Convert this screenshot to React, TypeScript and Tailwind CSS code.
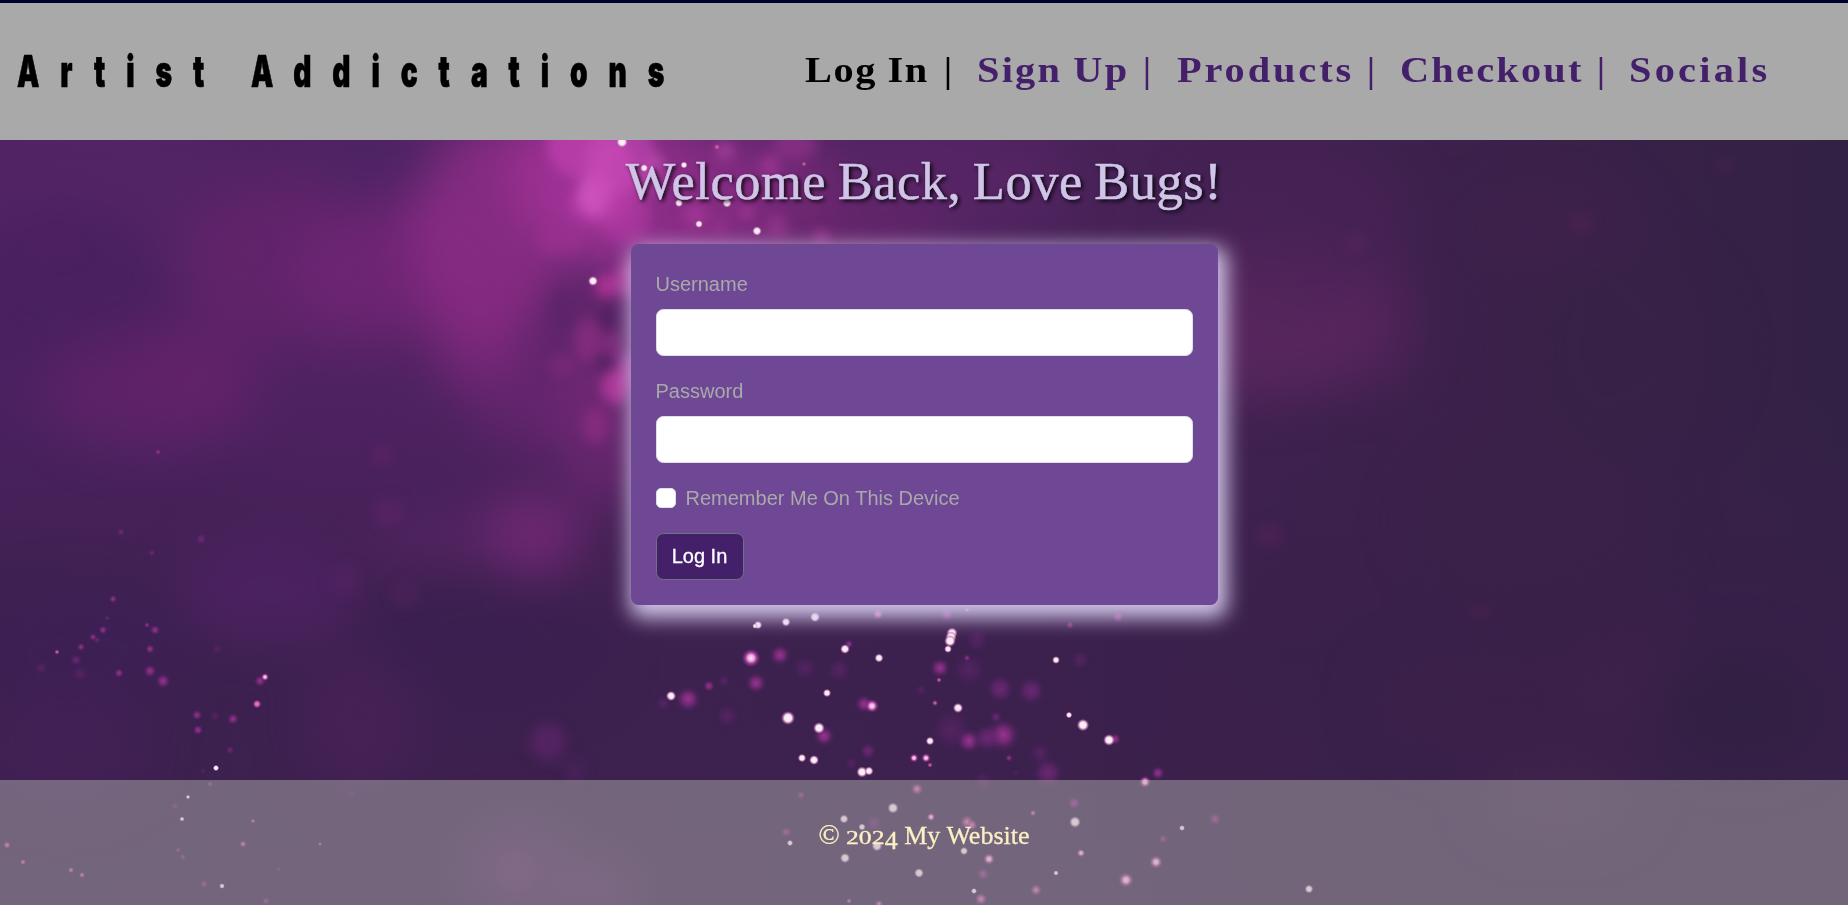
type Glow = [number, number, number, number, string, number];
type Spark = [number, number, number, string];

// x, y, rx, ry, colour, opacity
const haze: Glow[] = [
  [90, 200, 160, 90, "#552468", 0.6],
  [60, 300, 110, 90, "#48205f", 0.8],
  [330, 260, 150, 90, "#6a2470", 0.6],
  [400, 270, 110, 60, "#76277a", 0.6],
  [150, 390, 110, 60, "#68236d", 0.6],
  [200, 360, 60, 60, "#67236c", 0.4],
  [490, 230, 80, 110, "#8c2d86", 0.85],
  [480, 320, 50, 70, "#862a80", 0.7],
  [370, 150, 70, 50, "#4c2464", 0.75],
  [580, 170, 70, 80, "#a03196", 0.9],
  [650, 200, 100, 80, "#a23598", 0.8],
  [740, 200, 110, 70, "#842c82", 0.8],
  [860, 225, 90, 50, "#68266c", 0.8],
  [950, 180, 120, 50, "#5a2567", 0.7],
  [540, 400, 70, 50, "#6e2674", 0.6],
  [600, 400, 40, 110, "#7d2a7c", 0.6],
  [530, 535, 50, 42, "#792978", 0.8],
  [440, 540, 70, 30, "#5e2569", 0.5],
  [340, 430, 90, 50, "#4c215f", 0.6],
  [270, 590, 90, 60, "#4e2264", 0.7],
  [80, 650, 110, 60, "#3f1f57", 0.7],
  [480, 640, 130, 70, "#3b1f50", 0.8],
  [60, 750, 90, 60, "#48205b", 0.5],
  [360, 720, 60, 70, "#4b215b", 0.6],
  [1270, 320, 120, 80, "#5b2760", 0.8],
  [1370, 320, 45, 70, "#56255d", 0.6],
  [1300, 220, 110, 80, "#4a2359", 0.6],
  [1560, 230, 80, 50, "#41224d", 0.5],
  [1620, 350, 100, 100, "#372246", 0.7],
  [1540, 520, 130, 90, "#392148", 0.5],
  [1500, 700, 130, 60, "#3c214a", 0.6],
  [1630, 680, 60, 60, "#40214a", 0.5],
  [1740, 710, 80, 60, "#2f2040", 0.6],
  [520, 870, 60, 50, "#5b2a66", 0.6],
  [600, 890, 40, 30, "#682f6e", 0.5],
  [1560, 800, 80, 40, "#48254f", 0.5],
];

const bokeh: Glow[] = [
  [585, 145, 38, 34, "#bd40ad", 0.75],
  [620, 160, 36, 38, "#c047b2", 0.6],
  [600, 205, 32, 20, "#b83ca8", 0.6],
  [596, 195, 19, 21, "#d45ac4", 0.75],
  [612, 170, 22, 30, "#c84ab6", 0.6],
  [560, 240, 24, 16, "#9d3293", 0.5],
  [625, 215, 25, 28, "#b83ba6", 0.5],
  [606, 286, 10, 12, "#bd349c", 0.8],
  [627, 280, 14, 16, "#b53a9f", 0.7],
  [588, 340, 14, 22, "#8c2d82", 0.7],
  [612, 345, 8, 14, "#95308a", 0.5],
  [615, 387, 14, 17, "#b53a9f", 0.85],
  [627, 370, 8, 18, "#b83fa5", 0.7],
  [596, 425, 13, 18, "#8e2d83", 0.7],
  [562, 366, 14, 12, "#7d2979", 0.6],
  [562, 310, 12, 22, "#5a2369", 0.6],
  [610, 318, 12, 12, "#4d205c", 0.7],
  [603, 362, 8, 9, "#4d205c", 0.7],
  [725, 151, 9, 8, "#c04bad", 0.6],
  [770, 166, 10, 10, "#a8389a", 0.7],
  [695, 215, 12, 12, "#b03d9f", 0.55],
  [747, 213, 6, 6, "#c343a8", 0.6],
  [777, 226, 11, 11, "#a23995", 0.6],
  [720, 226, 7, 7, "#a53997", 0.5],
  [821, 237, 7, 7, "#b03e9e", 0.7],
  [657, 163, 8, 8, "#c758b8", 0.5],
  [650, 180, 13, 13, "#b84aab", 0.5],
  [795, 145, 22, 14, "#96338c", 0.6],
  [382, 455, 11, 10, "#6b246c", 0.4],
  [388, 512, 15, 15, "#62236b", 0.45],
  [55, 250, 30, 15, "#59246a", 0.2],
  [252, 250, 9, 10, "#6a296f", 0.3],
  [345, 580, 16, 16, "#5b2568", 0.35],
  [405, 595, 14, 14, "#572463", 0.35],
  [548, 742, 18, 18, "#5c2569", 0.7],
  [575, 772, 10, 13, "#512360", 0.5],
  [515, 870, 20, 22, "#693069", 0.3],
  [1355, 243, 12, 10, "#5d285f", 0.4],
  [1581, 223, 12, 10, "#52264f", 0.5],
  [1268, 535, 15, 12, "#542359", 0.5],
  [1480, 612, 12, 8, "#4d244e", 0.5],
  [1725, 165, 10, 8, "#48254d", 0.5],
];

// x, y, radius, kind
const sparks: Spark[] = [
  [622, 142, 5, "w"], [644, 168, 3.5, "w"], [684, 165, 3, "w"], [717, 147, 2.5, "p"],
  [679, 203, 3.5, "w"], [727, 203, 4, "w"], [699, 224, 3.3, "w"], [757, 231, 4, "w"],
  [804, 164, 2, "p"], [593, 281, 4.2, "w"], [158, 452, 2.2, "m"],
  [758, 625, 3.5, "w"], [755, 626, 2.2, "w"], [786, 622, 3.7, "w"], [815, 617, 4.2, "w"],
  [878, 614, 4, "p"], [947, 614, 5, "m"], [967, 610, 2, "p"], [1070, 625, 2.8, "m"], [1118, 617, 4, "m"],
  [952, 633, 4.6, "w"], [951, 637, 4.6, "w"], [950, 641, 4.8, "w"], [948, 649, 3.2, "w"],
  [751, 658, 6.2, "h"], [780, 655, 7, "m"], [756, 683, 7, "m"], [849, 644, 3, "m"], [845, 649, 4, "w"],
  [879, 658, 3.7, "w"], [805, 668, 9, "f"], [839, 670, 9, "f"], [709, 686, 4, "m"], [724, 681, 5, "f"],
  [671, 696, 4.2, "w"], [688, 699, 8.5, "m"], [663, 703, 6, "f"], [727, 716, 9, "f"],
  [827, 693, 3.4, "w"], [864, 704, 6, "m"], [872, 706, 4.6, "h"], [788, 718, 5.7, "w"],
  [824, 736, 7, "m"], [819, 728, 4.8, "w"], [940, 668, 6.5, "m"], [969, 670, 12, "f"],
  [977, 640, 9, "f"], [1000, 689, 10, "m2"], [1031, 691, 10, "m2"], [939, 680, 2, "p"],
  [921, 690, 4, "f"], [935, 703, 2.2, "p"], [958, 708, 4.2, "w"], [967, 658, 2.3, "m"],
  [1056, 660, 3.2, "w"], [1080, 660, 7, "f"], [951, 730, 15, "f"], [969, 741, 8, "m"],
  [1003, 735, 11, "m"], [987, 738, 10, "m2"], [996, 717, 4, "m2"], [930, 741, 3.5, "w"],
  [1069, 715, 2.7, "w"], [1083, 725, 5.1, "w"], [1115, 739, 4, "m"], [1109, 740, 4.8, "w"],
  [868, 751, 6, "m2"], [802, 758, 3.5, "w"], [814, 760, 4.1, "w"], [851, 763, 5, "f"],
  [914, 758, 3, "h"], [926, 758, 3.2, "h"], [930, 765, 2, "p"], [862, 772, 4.6, "w"], [869, 771, 3.7, "w"],
  [1009, 758, 2.5, "m"], [1040, 753, 8, "f"], [1048, 773, 11, "m2"], [1016, 773, 2, "f"],
  [983, 782, 8, "f"], [1158, 773, 4.6, "m"], [1145, 782, 4, "h"],
  [801, 795, 3, "m"], [917, 789, 4.6, "p"], [893, 808, 4.6, "w"], [844, 819, 3.7, "w"],
  [874, 823, 6, "m2"], [862, 827, 3, "w"], [931, 817, 2.9, "h"], [967, 822, 5, "p"], [972, 825, 4, "p"],
  [786, 832, 3.8, "m"], [790, 843, 2.6, "w"], [877, 846, 4.4, "w"], [845, 858, 4.2, "w"],
  [964, 851, 3.4, "w"], [989, 859, 4, "h"], [919, 873, 4, "w"], [983, 874, 4.5, "m"],
  [974, 891, 2.5, "w"], [981, 899, 4.5, "p"], [1036, 890, 4.3, "p"], [1056, 873, 2.2, "w"],
  [1074, 803, 4.5, "m"], [1075, 822, 4.8, "w"], [1033, 813, 2.4, "p"], [1081, 853, 2.9, "h"],
  [1126, 880, 5.1, "h"], [1156, 862, 4.5, "h"], [1182, 828, 2.4, "w"], [1163, 839, 3, "m"],
  [1215, 819, 4.2, "m"], [879, 904, 3, "p"], [849, 901, 2, "p"], [1309, 889, 3.6, "w"],
  [152, 553, 2.6, "m2"], [113, 599, 2.7, "m"], [147, 625, 2, "m"], [155, 630, 3.4, "m"],
  [103, 630, 3, "m"], [107, 618, 1.8, "m2"], [93, 637, 2.5, "m"], [97, 640, 2.5, "m2"],
  [81, 647, 2.7, "m"], [57, 652, 2, "p"], [76, 660, 4, "m2"], [80, 674, 6, "f"], [41, 668, 5, "f"],
  [150, 649, 3.2, "m"], [150, 671, 4.4, "m"], [119, 673, 3.2, "m"], [163, 681, 5, "m"],
  [260, 681, 4, "m"], [265, 677, 2.7, "h"], [257, 704, 3.2, "h2"], [197, 715, 3.5, "m"],
  [198, 730, 3.5, "m"], [233, 719, 4, "m"], [230, 750, 3, "m2"], [216, 768, 2.6, "w"],
  [217, 649, 4, "f"], [215, 716, 4, "f"], [203, 771, 2.5, "f"], [210, 784, 2.2, "m"],
  [188, 797, 1.8, "w"], [175, 806, 3, "m2"], [182, 819, 2, "w"], [253, 821, 1.8, "p"],
  [243, 844, 2.6, "p"], [320, 844, 1.5, "p"], [178, 850, 2, "m"], [183, 857, 2, "m"],
  [7, 845, 2.8, "p"], [23, 862, 2.2, "p"], [71, 870, 2.3, "p"], [82, 875, 2.3, "p"],
  [204, 884, 2.8, "m"], [222, 886, 2.3, "w"], [266, 901, 2.6, "m"], [279, 869, 2, "m2"],
  [351, 794, 4, "f"], [121, 532, 3, "m2"], [201, 539, 4, "m2"],
];

const kinds: Record<string, string> = {
  w: "url(#white)",
  h: "url(#hot)",
  h2: "url(#rose)",
  p: "url(#pink)",
  m: "url(#magenta)",
  m2: "url(#plum)",
  f: "url(#faint)",
};

const spread: Record<string, number> = { w: 1.25, h: 1.5, h2: 1.4, p: 1.4, m: 1.6, m2: 1.6, f: 1.6 };

function Backdrop() {
  return (
    <svg className="absolute inset-0 h-full w-full" viewBox="0 0 1848 905" preserveAspectRatio="xMidYMid slice" aria-hidden="true">
      <defs>
        <linearGradient id="base" x1="0" y1="0" x2="1" y2="0">
          <stop offset="0" stopColor="#4d2262" />
          <stop offset="0.25" stopColor="#522363" />
          <stop offset="0.5" stopColor="#4e2460" />
          <stop offset="0.7" stopColor="#40214f" />
          <stop offset="0.85" stopColor="#3a2149" />
          <stop offset="1" stopColor="#322144" />
        </linearGradient>
        <linearGradient id="fall" x1="0" y1="0" x2="0" y2="1">
          <stop offset="0.4" stopColor="#38204a" stopOpacity="0" />
          <stop offset="0.72" stopColor="#38204a" stopOpacity="0.82" />
          <stop offset="1" stopColor="#39204a" stopOpacity="0.8" />
        </linearGradient>
        <filter id="wide" x="-20%" y="-20%" width="140%" height="140%" colorInterpolationFilters="sRGB">
          <feGaussianBlur stdDeviation="24" />
        </filter>
        <filter id="soft" x="-20%" y="-20%" width="140%" height="140%" colorInterpolationFilters="sRGB">
          <feGaussianBlur stdDeviation="6" />
        </filter>
        <radialGradient id="white">
          <stop offset="0" stopColor="#fdf2fb" />
          <stop offset="0.5" stopColor="#f8e6f3" />
          <stop offset="0.75" stopColor="#c97fb8" stopOpacity="0.7" />
          <stop offset="1" stopColor="#8a3a86" stopOpacity="0" />
        </radialGradient>
        <radialGradient id="hot">
          <stop offset="0" stopColor="#fbe2f4" />
          <stop offset="0.35" stopColor="#eea6dd" />
          <stop offset="0.65" stopColor="#b43fa3" stopOpacity="0.7" />
          <stop offset="1" stopColor="#8a2f86" stopOpacity="0" />
        </radialGradient>
        <radialGradient id="rose">
          <stop offset="0" stopColor="#f08ad6" />
          <stop offset="0.5" stopColor="#d04db4" />
          <stop offset="1" stopColor="#8a2f86" stopOpacity="0" />
        </radialGradient>
        <radialGradient id="pink">
          <stop offset="0" stopColor="#e080c0" />
          <stop offset="0.45" stopColor="#c0509c" stopOpacity="0.75" />
          <stop offset="1" stopColor="#8a2f86" stopOpacity="0" />
        </radialGradient>
        <radialGradient id="magenta">
          <stop offset="0" stopColor="#a8379c" stopOpacity="0.85" />
          <stop offset="0.4" stopColor="#96308e" stopOpacity="0.62" />
          <stop offset="0.75" stopColor="#7a2a7c" stopOpacity="0.18" />
          <stop offset="1" stopColor="#7a2a7c" stopOpacity="0" />
        </radialGradient>
        <radialGradient id="plum">
          <stop offset="0" stopColor="#7d2a80" stopOpacity="0.75" />
          <stop offset="0.45" stopColor="#70287a" stopOpacity="0.5" />
          <stop offset="0.75" stopColor="#5a2468" stopOpacity="0.17" />
          <stop offset="1" stopColor="#5a2468" stopOpacity="0" />
        </radialGradient>
        <radialGradient id="faint">
          <stop offset="0" stopColor="#62266f" stopOpacity="0.65" />
          <stop offset="0.45" stopColor="#5a2468" stopOpacity="0.42" />
          <stop offset="0.75" stopColor="#4a2260" stopOpacity="0.15" />
          <stop offset="1" stopColor="#4a2260" stopOpacity="0" />
        </radialGradient>
      </defs>
      <rect width="1848" height="905" fill="url(#base)" />
      <rect width="1848" height="905" fill="url(#fall)" />
      <g filter="url(#wide)">
        {haze.map(([x, y, rx, ry, c, o], i) => (
          <ellipse key={i} cx={x} cy={y} rx={rx} ry={ry} fill={c} opacity={o} />
        ))}
      </g>
      <g filter="url(#soft)">
        {bokeh.map(([x, y, rx, ry, c, o], i) => (
          <ellipse key={i} cx={x} cy={y} rx={rx} ry={ry} fill={c} opacity={o} />
        ))}
      </g>
      {sparks.map(([x, y, r, k], i) => (
        <circle key={i} cx={x} cy={y} r={r * spread[k]} fill={kinds[k]} />
      ))}
    </svg>
  );
}

function Header() {
  const link = "inline-block origin-left scale-x-112 whitespace-nowrap";
  return (
    <header className="flex h-[140px] items-start border-t-3 border-[#00002c] bg-[#a9a9a9]">
      <h1 className="ml-[17px] mt-[41px] w-[788px] whitespace-nowrap font-['Inter',sans-serif] text-[44px] leading-[54px] font-black text-black">
        <span className="inline-block origin-left scale-x-64 tracking-[32.7px] [-webkit-text-stroke:0.7px_black] [word-spacing:-1px]">Artist Addictations</span>
      </h1>
      <nav className="mt-[45px] font-['Liberation_Serif',serif] text-[36px] leading-[44px] font-bold text-[#44206a]">
        <ul className="flex">
          <li className="flex w-[172px] text-black">
            <span className="w-[139px]">
              <a className={link + " tracking-[1.4px] [word-spacing:-1px]"}>Log In</a>
            </span>
            <span>|</span>
          </li>
          <li className="flex w-[200px]">
            <span className="w-[166px]">
              <a className={link + " tracking-[2px] [word-spacing:-1px]"}>Sign Up</a>
            </span>
            <span>|</span>
          </li>
          <li className="flex w-[223px]">
            <span className="w-[190px]">
              <a className={link + " tracking-[2.6px]"}>Products</a>
            </span>
            <span>|</span>
          </li>
          <li className="flex w-[229px]">
            <span className="w-[197px]">
              <a className={link + " tracking-[2px]"}>Checkout</a>
            </span>
            <span>|</span>
          </li>
          <li className="flex">
            <a className={link + " tracking-[2.9px]"}>Socials</a>
          </li>
        </ul>
      </nav>
    </header>
  );
}

function Field({ label, type }: { label: string; type: string }) {
  return (
    <label className="mb-[20px] block">
      <span className="mb-[10px] block">{label}</span>
      <input type={type} className="block h-[47px] w-full rounded-[7.5px] border border-[#dee2e6] bg-white px-[15px] text-black" />
    </label>
  );
}

function LoginCard() {
  return (
    <form className="h-[361px] w-[587px] rounded-[7.5px] bg-[#6f4895] p-[25px] font-['Liberation_Sans',sans-serif] text-[20px] leading-[30px] text-[#a9a9a9] shadow-[4px_8px_20px_5px_#d0c5e8]">
      <Field label="Username" type="text" />
      <Field label="Password" type="password" />
      <label className="mb-[20px] flex items-center gap-[10px]">
        <input type="checkbox" className="size-[20px] appearance-none rounded-[5px] border border-[#dee2e6] bg-white" />
        <span>Remember Me On This Device</span>
      </label>
      <button type="button" className="block h-[47px] w-[88px] rounded-[7.5px] border border-[#6c757d] bg-[#44206a] pb-px text-center text-white [-webkit-text-stroke:0.3px_white]">
        Log In
      </button>
    </form>
  );
}

export default function App() {
  return (
    <div className="relative h-[905px] w-full overflow-hidden bg-[#3d2150]">
      <Backdrop />
      <div className="relative flex h-full flex-col">
        <Header />
        <main className="flex h-[640px] flex-col items-center">
          <h2 className="mt-[11px] mb-[33px] h-[60px] whitespace-nowrap font-['Liberation_Serif',serif] text-[52.5px] leading-[60px] tracking-[0.5px] text-[#d0c5e8] [-webkit-text-stroke:0.5px_#d0c5e8] [text-shadow:2px_2px_4px_#000000] [word-spacing:-2px]">
            Welcome Back, Love Bugs!
          </h2>
          <LoginCard />
        </main>
        <footer className="flex h-[125px] justify-center bg-[#a9a9a9]/50 pt-[37px] font-['Liberation_Serif',serif] text-[26px] leading-[36px] text-[#fbefc4] [-webkit-text-stroke:0.3px_#fbefc4]">
          <p className="whitespace-nowrap">
            <span className="text-[28px]">©</span> <span className="mr-[10px] inline-block origin-left scale-x-135 text-[19px]">202</span><span className="relative top-[5px]">4</span> My Website
          </p>
        </footer>
      </div>
    </div>
  );
}
